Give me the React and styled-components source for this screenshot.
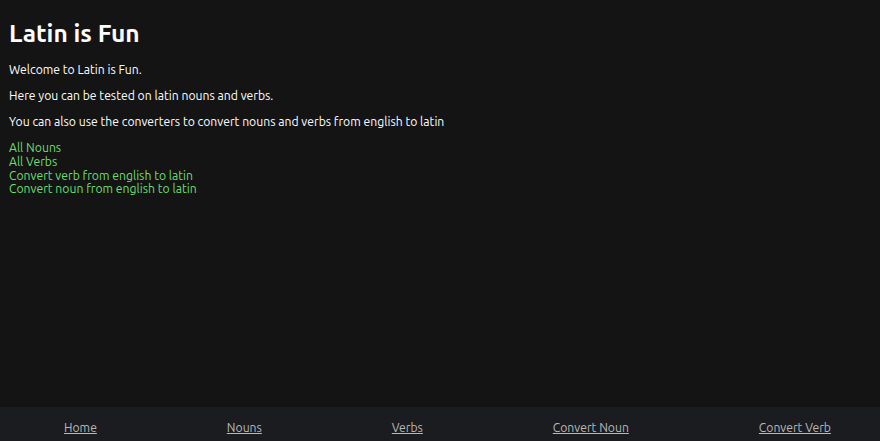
import React from "react";
import styled, { createGlobalStyle } from "styled-components";

const Global = createGlobalStyle`
  html, body { margin: 0; padding: 0; height: 100%; }
  body {
    background: #141415;
    color: #ffffff;
    font-family: "Ubuntu", "Open Sans", "Noto Sans", sans-serif;
    font-size: 12.2px;
  }
  #root { height: 100%; }
`;

const Page = styled.div`
  display: flex;
  flex-direction: column;
  height: 441px;
`;

const Main = styled.main`
  flex: 1;
  padding: 8px 9px;
`;

const Title = styled.h1`
  font-size: 24.5px;
  font-weight: 700;
  margin: 11px 0 16px;
`;

const Para = styled.p`
  margin: 12px 0;
  line-height: 13.8px;
`;

const LinkList = styled.div`
  display: flex;
  flex-direction: column;
  margin-top: 13px;
`;

const GreenLink = styled.a`
  color: #6ade6f;
  text-decoration: none;
  line-height: 13.6px;
  height: 13.6px;
`;

const Footer = styled.nav`
  height: 34px;
  background: #1b1c1f;
  display: flex;
  align-items: center;
  justify-content: space-between;
  padding: 7px 49px 0 64px;
  box-sizing: border-box;
`;

const NavLink = styled.a`
  color: #b8b8b8;
  text-decoration: underline;
  font-size: 12.2px;
`;

export default function App() {
  return (
    <Page>
      <Global />
      <Main>
        <Title>Latin is Fun</Title>
        <Para>Welcome to Latin is Fun.</Para>
        <Para>Here you can be tested on latin nouns and verbs.</Para>
        <Para>You can also use the converters to convert nouns and verbs from english to latin</Para>
        <LinkList>
          <GreenLink href="#">All Nouns</GreenLink>
          <GreenLink href="#">All Verbs</GreenLink>
          <GreenLink href="#">Convert verb from english to latin</GreenLink>
          <GreenLink href="#">Convert noun from english to latin</GreenLink>
        </LinkList>
      </Main>
      <Footer>
        <NavLink href="#">Home</NavLink>
        <NavLink href="#">Nouns</NavLink>
        <NavLink href="#">Verbs</NavLink>
        <NavLink href="#">Convert Noun</NavLink>
        <NavLink href="#">Convert Verb</NavLink>
      </Footer>
    </Page>
  );
}
